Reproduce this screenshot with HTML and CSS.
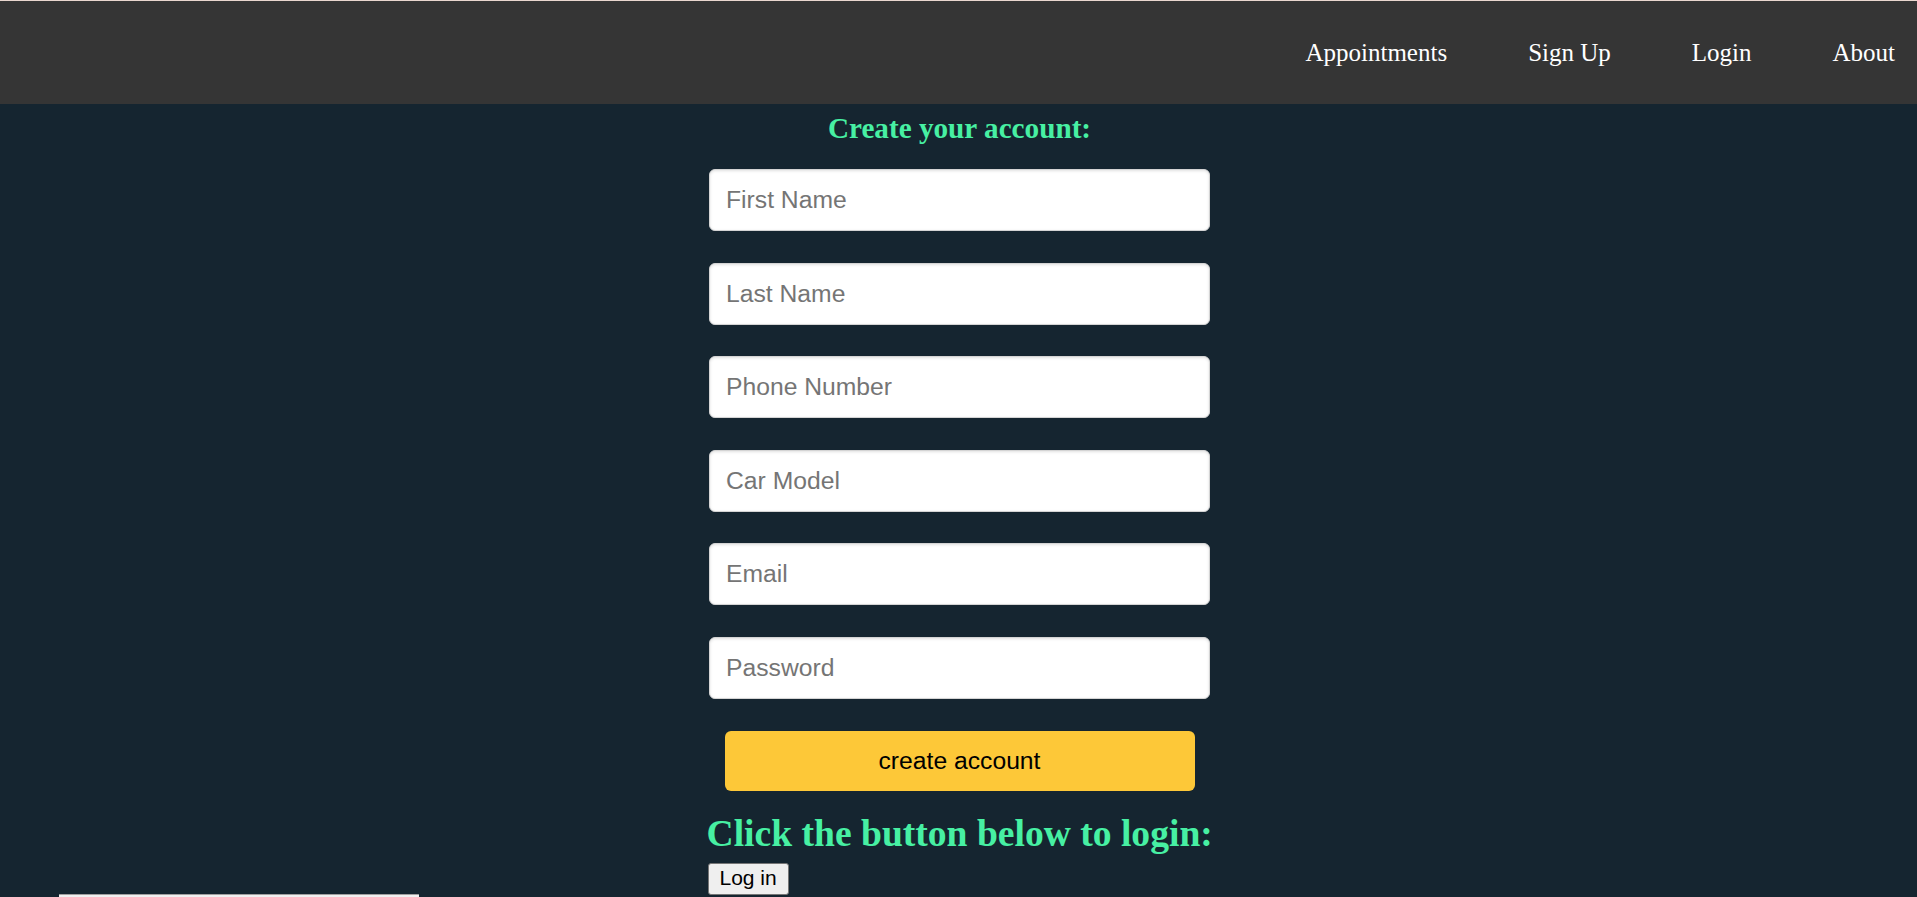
FILE: index.html
```html
<!DOCTYPE html>
<html lang="en">
<head>
<meta charset="utf-8">
<title>Sign Up</title>
<link rel="stylesheet" href="styles.css">
</head>
<body>
  <nav class="topnav">
    <a class="nav-link" href="#">Appointments</a>
    <a class="nav-link" href="#">Sign Up</a>
    <a class="nav-link" href="#">Login</a>
    <a class="nav-link" href="#">About</a>
  </nav>
  <main class="signup">
    <h2 class="signup-title">Create your account:</h2>
    <form class="signup-form">
      <input class="field" type="text" placeholder="First Name">
      <input class="field" type="text" placeholder="Last Name">
      <input class="field" type="text" placeholder="Phone Number">
      <input class="field" type="text" placeholder="Car Model">
      <input class="field" type="email" placeholder="Email">
      <input class="field" type="password" placeholder="Password">
      <button class="create-btn" type="button">create account</button>
    </form>
    <h1 class="login-title">Click the button below to login:</h1>
    <button class="login-btn" type="button">Log in</button>
  </main>
  <div class="bottom-strip"></div>
</body>
</html>
```

FILE: styles.css
```css
html, body {
  margin: 0;
  padding: 0;
}

body {
  background: #152530;
  font-family: "Liberation Serif", "Times New Roman", serif;
  min-height: 897px;
  overflow: hidden;
  position: relative;
}

.topnav {
  height: 103px;
  border-top: 1px solid #ead7cf;
  background: #353535;
  display: flex;
  justify-content: flex-end;
  align-items: center;
  gap: 81px;
  padding-right: 22px;
}

.nav-link {
  color: #ffffff;
  text-decoration: none;
  font-size: 25px;
  line-height: normal;
}

.signup {
  width: 502px;
  padding-left: 2px;
  margin: 0 auto;
  display: flex;
  flex-direction: column;
}

.signup-title {
  margin: 8px 0 24px;
  font-size: 29.2px;
  font-weight: bold;
  line-height: normal;
  color: #47f0a3;
  text-align: center;
  white-space: nowrap;
}

.signup-form {
  display: flex;
  flex-direction: column;
  align-items: center;
  gap: 31.6px;
  margin: 0;
}

.field {
  box-sizing: border-box;
  width: 501px;
  height: 62px;
  margin: 0;
  padding: 0 16px;
  border: 1px solid #d4d4d4;
  border-radius: 6px;
  background: #ffffff;
  box-shadow: inset 0 1px 3px rgba(0, 0, 0, 0.12);
  font-family: "Liberation Sans", Arial, sans-serif;
  font-size: 24.7px;
  color: #333;
  outline: none;
}

.field::placeholder {
  color: #757575;
}

.create-btn {
  width: 470px;
  height: 60px;
  margin: 0;
  border: none;
  border-radius: 6px;
  background: #fdc838;
  color: #000;
  font-family: "Liberation Sans", Arial, sans-serif;
  font-size: 24.7px;
  cursor: pointer;
}

.login-title {
  margin: 21.5px -2px 8px;
  font-size: 37.6px;
  font-weight: bold;
  line-height: normal;
  color: #47f0a3;
  text-align: center;
  white-space: nowrap;
}

.login-btn {
  align-self: flex-start;
  margin: 0 0 0 -1px;
  padding: 2px 11px 4px;
  border: 1px solid #767676;
  border-radius: 3px;
  background: #efefef;
  color: #000;
  font-family: "Liberation Sans", Arial, sans-serif;
  font-size: 21px;
  line-height: normal;
}

.bottom-strip {
  position: absolute;
  left: 59px;
  bottom: 0;
  width: 360px;
  height: 2px;
  background: #f0f0f0;
  border-top: 1px solid #a0a0a0;
}
```
